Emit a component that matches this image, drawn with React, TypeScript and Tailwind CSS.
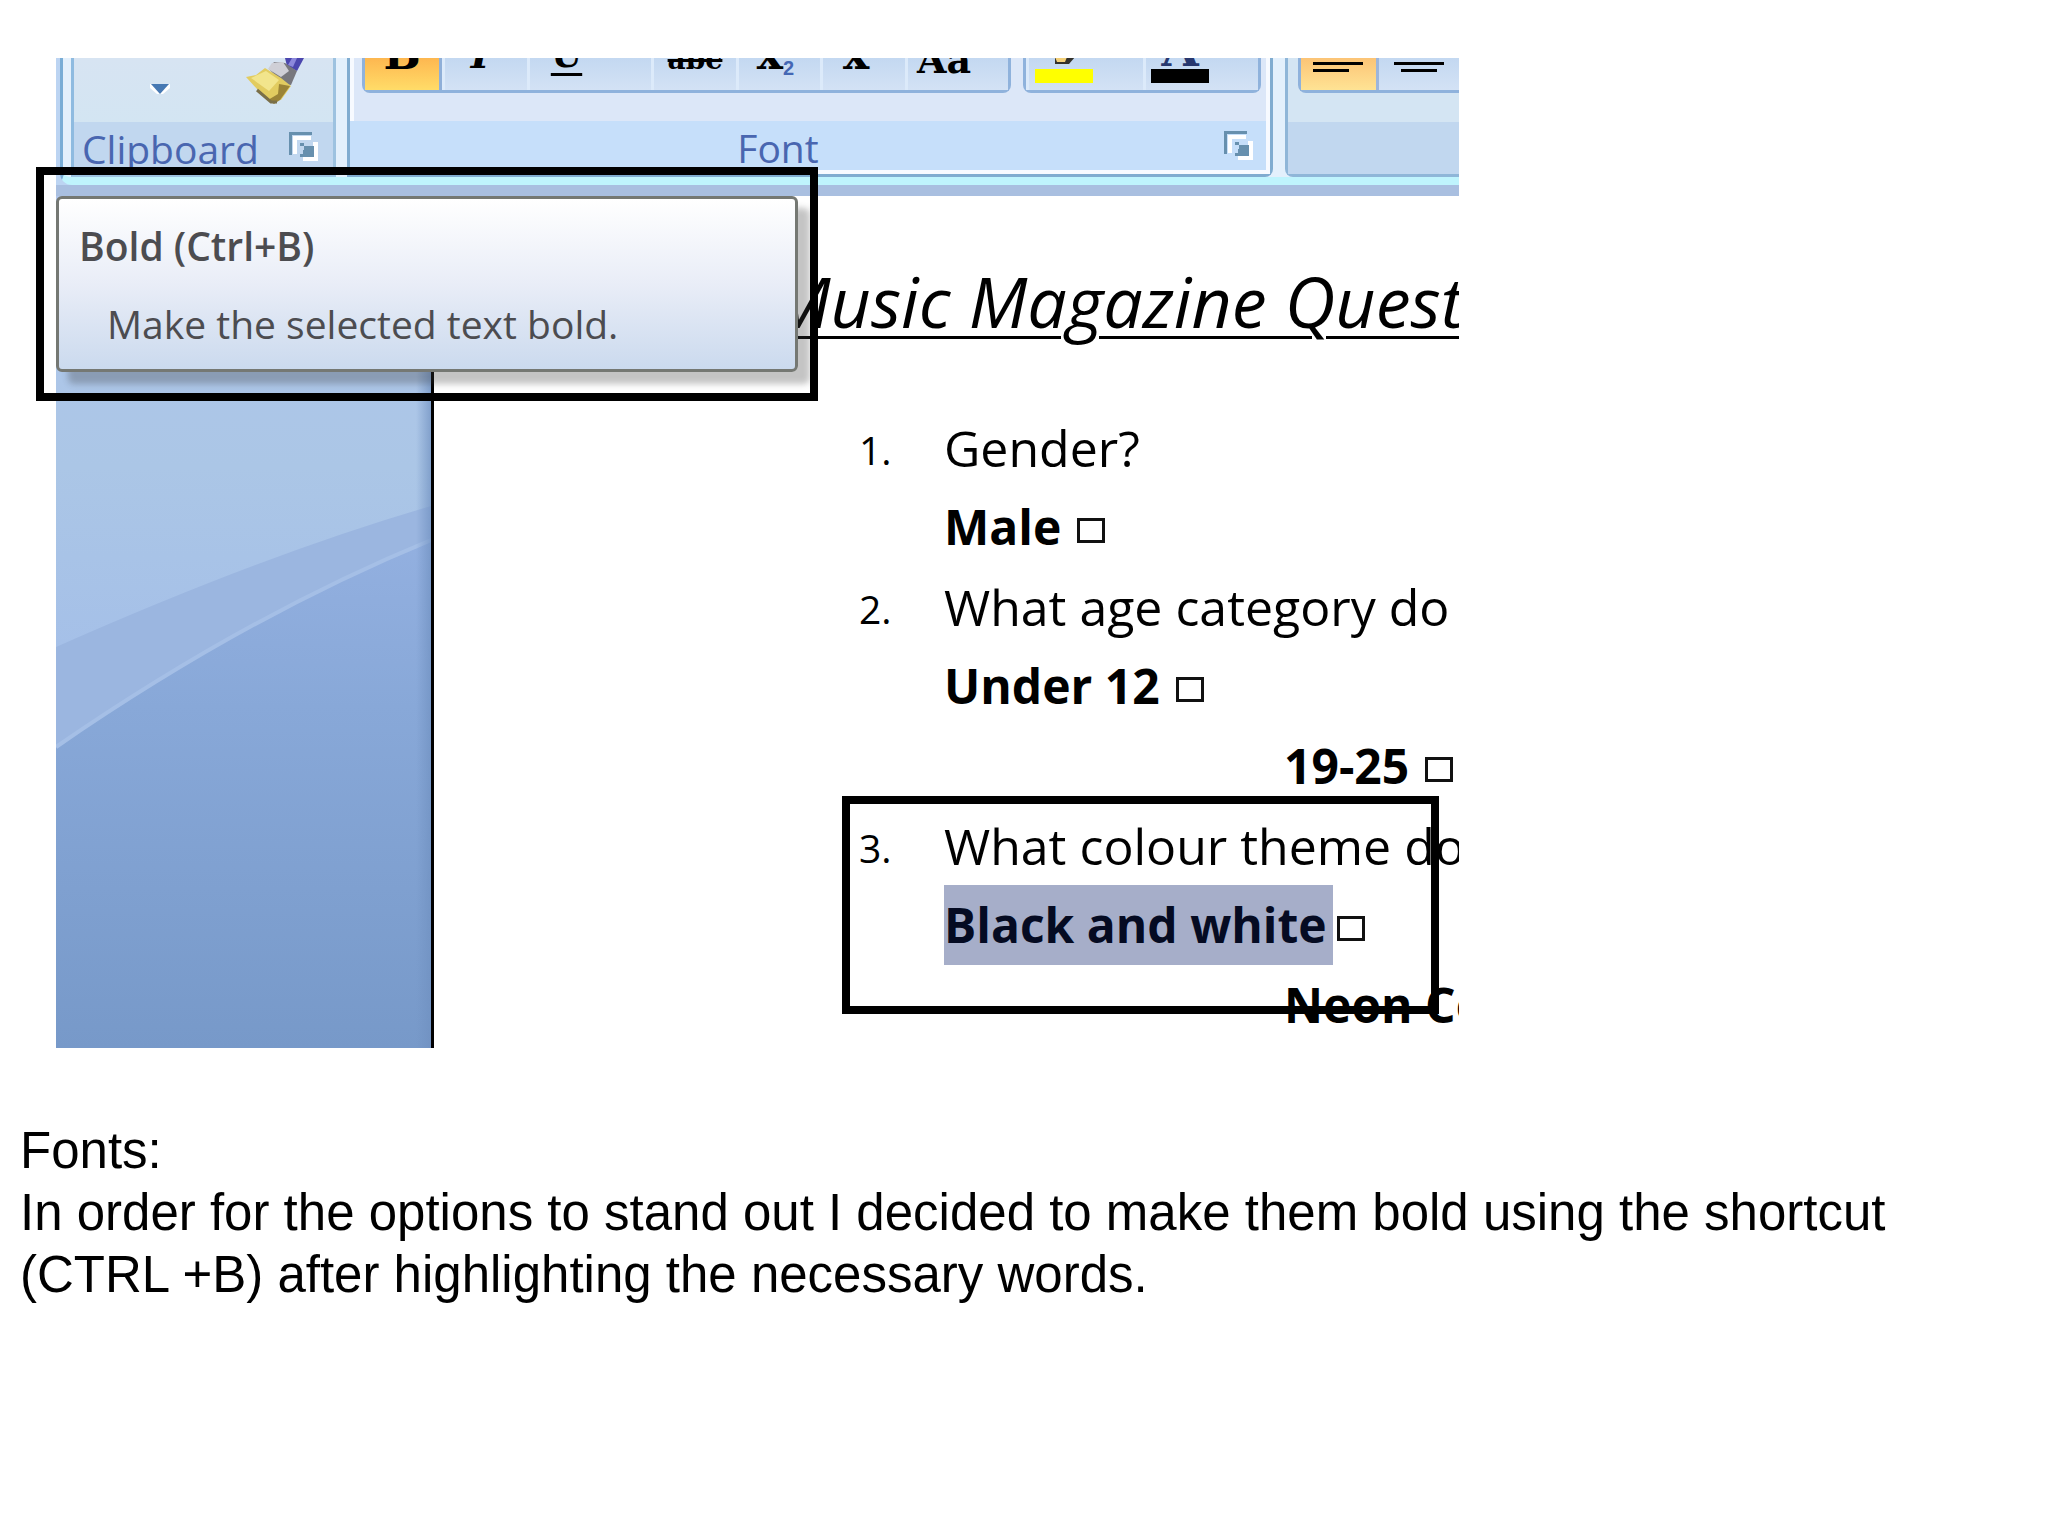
import type { ReactNode } from "react";

function Launcher({ label }: { label: string }) {
  return (
    <button aria-label={label} className="h-8 w-8 shrink-0">
      <svg viewBox="0 0 32 32" className="h-8 w-8" shapeRendering="crispEdges">
        <path d="M2 25V2H25V5H5V25Z" fill="#6790ae" />
        <path d="M6 24V6H24V10H10V24Z" fill="#fff" />
        <path d="M26 12H31V31H16V27H26Z" fill="#fff" />
        <path d="M13 13H17V16H27V27H13V24H16V20H17V16H13Z" fill="#6790ae" />
      </svg>
    </button>
  );
}

function Tool({ label, width, active, children }: { label: string; width: string; active?: boolean; children?: ReactNode }) {
  return (
    <button
      aria-label={label}
      className={`flex h-full shrink-0 items-end justify-center overflow-hidden font-['DejaVu_Serif'] font-bold leading-[72px] text-black ${width} ${
        active
          ? "border-r-3 border-[#8fafd8] bg-linear-to-b from-[#fdb750] to-[#ffdc68]"
          : "border-l-3 border-[#dceafa] bg-linear-to-b from-[#c3d8f1] to-[#d3e2f5]"
      }`}
    >
      {children}
    </button>
  );
}

function Brush() {
  return (
    <svg viewBox="0 0 60 48" className="h-12 w-15">
      <path d="M40 0H59L52 13L42 8Z" fill="#4b46ae" />
      <path d="M47 0H52L48 9L43 7Z" fill="#8c88dc" />
      <path d="M29 4L40 5L52 13L46 27L38 26L24 11Z" fill="#77777d" />
      <path d="M27 5L38 4L44 13L36 19L23 11Z" fill="#cfcfd6" />
      <path d="M1 19L11 17L20 10L36 20L46 28L36 42L25 43L12 31Z" fill="#e2cc60" />
      <path d="M6 20L21 13L34 22L24 33Z" fill="#f2e58c" />
      <path d="M34 26L45 28L35 42L29 46L23 42L33 36Z" fill="#9b8436" />
      <path d="M12 32L26 44H32" fill="none" stroke="#7a6f48" strokeWidth="3" />
    </svg>
  );
}

function Choice({ text, selected }: { text: string; selected?: boolean }) {
  return (
    <label className="flex h-20 items-center font-bold">
      <span className={selected ? "h-20 bg-[#a6aec9] pr-1.5 text-[#050b22]" : "pr-4"}>{text}</span>
      <input type="checkbox" className={`mt-1.5 h-[25px] w-7 shrink-0 appearance-none border-3 border-[#111] bg-white ${selected ? "ml-1" : ""}`} />
    </label>
  );
}

function Question({ number, text, children }: { number: string; text: string; children: ReactNode }) {
  return (
    <li className="flex whitespace-nowrap">
      <span className="w-[85px] shrink-0 pt-0.5 text-[39px]">{number}</span>
      <div>
        <p className="h-[79px] text-[50px]">{text}</p>
        {children}
      </div>
    </li>
  );
}

function Ribbon() {
  return (
    <div className="flex h-[138px] flex-col border-b-11 border-[#a9bfe0] bg-[#bcd4f2]">
      <div className="ml-1 flex h-[127px] flex-col rounded-bl-xl border-b-8 border-l-3 border-b-[#bff4fd] border-l-[#79add6] bg-[#e3f0fc] pl-2">
        <div className="flex h-[119px]">
          <section className="flex w-[265px] shrink-0 flex-col border-x-3 border-b-3 border-[#9dc2e0] border-l-[#8fbbe0]">
            <div className="flex grow items-start bg-linear-to-b from-[#d7e4f2] to-[#d3e5f2]">
              <button aria-label="Paste options" className="ml-[76px] mt-6 h-4 w-5">
                <svg viewBox="0 0 20 12" className="h-3 w-5">
                  <path d="M0 0H20V4L13 10H7L0 4Z" fill="#fff" />
                  <path d="M1 0H19L10 10Z" fill="#4779b3" />
                </svg>
              </button>
              <button aria-label="Format painter" className="ml-[75px]"><Brush /></button>
            </div>
            <div className="flex h-[52px] items-start justify-between bg-[#c1d7ef] pl-2 pr-3.5 font-['Open_Sans'] text-[39px] leading-[54px] text-[#4966b0]">
              <span>Clipboard</span>
              <span className="flex pt-2"><Launcher label="Clipboard settings" /></span>
            </div>
          </section>
          <section className="ml-[11px] flex w-[926px] shrink-0 flex-col rounded-br-lg border-x-3 border-b-3 border-[#80acd0]">
            <div className="flex grow items-start border-x-4 border-[#f7faff] bg-[#dce7f8] pl-2">
              <div className="flex h-[35px] w-[649px] rounded-b-lg border-x-3 border-b-3 border-[#8fb2dc]">
                <Tool label="Bold" width="w-[77px]" active><span className="text-[44px]">B</span></Tool>
                <Tool label="Italic" width="w-[85px]"><span className="mr-3 text-[40px] italic">I</span></Tool>
                <Tool label="Underline" width="w-[124px]"><span className="mr-12 text-[36px] underline decoration-3 underline-offset-6">U</span></Tool>
                <Tool label="Strikethrough" width="w-[85px]"><span className="text-[28px] leading-[60px] line-through decoration-3">abc</span></Tool>
                <Tool label="Subscript" width="w-[84px]">
                  <span className="mr-2 text-[44px]">x</span>
                  <span className="-ml-2 mr-2 font-['Liberation_Sans'] text-xl leading-[44px] text-[#4467b4]">2</span>
                </Tool>
                <Tool label="Superscript" width="w-[85px]"><span className="mr-4 text-[44px]">x</span></Tool>
                <Tool label="Change case" width="w-[103px]"><span className="mr-7 text-[38px] leading-[60px]">Aa</span></Tool>
              </div>
              <div className="ml-3 flex h-[35px] w-[238px] rounded-b-lg border-x-3 border-b-3 border-[#8fb2dc]">
                <Tool label="Highlight colour" width="w-[117px]">
                  <span className="mb-[7px] mr-11 flex w-[58px] flex-col items-center">
                    <svg viewBox="0 0 24 12" className="h-3 w-6">
                      <path d="M3 0H23L17 7H3Z" fill="#33312b" />
                      <path d="M3 0H15L13 5H5Z" fill="#f2cf79" />
                    </svg>
                    <span className="h-[14px] w-full bg-[#ff0]" />
                  </span>
                </Tool>
                <Tool label="Font colour" width="w-[115px]">
                  <span className="mb-[7px] mr-11 flex w-[58px] flex-col items-center justify-end">
                    <span className="h-5 text-[48px] leading-[0px] text-[#27376e]">A</span>
                    <span className="h-[14px] w-full bg-black" />
                  </span>
                </Tool>
              </div>
            </div>
            <div className="flex h-[53px] items-start border-b-4 border-r-4 border-[#f7faff] bg-[#c6dffa] font-['Open_Sans'] text-[39px] leading-[54px] text-[#4966b0]">
              <span className="mr-4 grow text-center">Font</span>
              <span className="flex pr-3 pt-2"><Launcher label="Font settings" /></span>
            </div>
          </section>
          <section className="ml-3 flex min-w-0 grow flex-col rounded-bl-lg border-b-3 border-l-3 border-[#8fb6d8]">
            <div className="flex grow items-start bg-[#d4e5f3] pl-2.5">
              <div className="flex h-[35px] grow rounded-bl-lg border-b-3 border-l-3 border-[#8fb2dc]">
                <button aria-label="Align left" className="flex w-[78px] flex-col gap-1 border-r-3 border-[#9db6dc] bg-linear-to-b from-[#fcc476] to-[#fee394] pl-3 pt-1">
                  <span className="h-[3px] w-[50px] bg-black" />
                  <span className="h-[3px] w-9 bg-black" />
                </button>
                <button aria-label="Centre" className="flex grow flex-col items-center gap-1 bg-linear-to-b from-[#c3d8f1] to-[#d3e2f5] pt-1">
                  <span className="h-[3px] w-[50px] bg-black" />
                  <span className="h-[3px] w-9 bg-black" />
                </button>
              </div>
            </div>
            <div className="h-[52px] bg-[#c1d7ef]" />
          </section>
        </div>
      </div>
    </div>
  );
}

export default function App() {
  return (
    <main className="min-h-screen bg-white pt-[58px] text-black">
      <div className="relative ml-14 w-[1403px]">
        <div className="overflow-hidden">
          <Ribbon />
          <div className="flex h-[852px] font-['Open_Sans']">
            <aside className="w-[378px] shrink-0 border-r-3 border-black">
              <svg viewBox="0 0 375 852" preserveAspectRatio="none" className="h-full w-full">
                <defs>
                  <linearGradient id="base" x2="0" y2="1">
                    <stop offset="0" stopColor="#b3c8ec" />
                    <stop offset="0.4" stopColor="#93b0e0" />
                    <stop offset="0.6" stopColor="#88a8d8" />
                    <stop offset="1" stopColor="#7799c9" />
                  </linearGradient>
                  <linearGradient id="upper" x2="0" y2="1">
                    <stop offset="0" stopColor="#b0c6ec" />
                    <stop offset="0.6" stopColor="#abc6e6" />
                    <stop offset="1" stopColor="#a5c0e8" />
                  </linearGradient>
                  <linearGradient id="edge">
                    <stop offset="0" stopColor="#6f90c0" stopOpacity="0" />
                    <stop offset="1" stopColor="#6f90c0" stopOpacity="0.7" />
                  </linearGradient>
                </defs>
                <rect width="375" height="852" fill="url(#base)" />
                <path d="M0 551Q190 420 375 344V0H0Z" fill="#9bb6e0" />
                <path d="M0 551Q190 420 375 344" fill="none" stroke="#a5bfe6" strokeWidth="4" />
                <path d="M0 451Q210 358 375 310V0H0Z" fill="url(#upper)" />
                <rect x="360" width="15" height="852" fill="url(#edge)" />
              </svg>
            </aside>
            <article className="min-w-0 grow overflow-hidden">
              <h1 className="ml-[338px] mt-[63px] h-24 whitespace-nowrap text-[70px] leading-[84px] italic underline decoration-3 underline-offset-8">
                Music Magazine Quest
              </h1>
              <ol className="ml-[425px] mt-[53px] text-[48px] leading-[80px]">
                <Question number="1." text="Gender?">
                  <Choice text="Male" />
                </Question>
                <Question number="2." text="What age category do">
                  <Choice text="Under 12" />
                  <div className="ml-[340px]"><Choice text="19-25" /></div>
                </Question>
                <Question number="3." text="What colour theme do">
                  <Choice text="Black and white" selected />
                  <div className="ml-[340px]"><Choice text="Neon Co" /></div>
                </Question>
              </ol>
            </article>
          </div>
        </div>
        <div role="tooltip" className="absolute left-0 top-[138px] h-[176px] w-[742px] rounded-md border-3 border-[#757873] bg-linear-to-b from-white via-[#e9edf7] to-[#cbdaee] pl-5 pt-5 font-['Open_Sans'] text-[39px] leading-[54px] text-[#4c4c50] shadow-[12px_12px_6px_rgba(60,60,60,0.3)]">
          <p className="font-semibold">Bold (Ctrl+B)</p>
          <p className="ml-7 mt-6">Make the selected text bold.</p>
        </div>
        <div className="absolute -left-5 top-[109px] h-[234px] w-[782px] border-8 border-black" />
        <div className="absolute left-[786px] top-[738px] h-[218px] w-[597px] border-8 border-black" />
      </div>
      <div className="mt-[72px] px-5 font-['Liberation_Sans'] text-[51px] leading-[62px]">
        <p>Fonts:</p>
        <p>In order for the options to stand out I decided to make them bold using the shortcut (CTRL +B) after highlighting the necessary words.</p>
      </div>
    </main>
  );
}
